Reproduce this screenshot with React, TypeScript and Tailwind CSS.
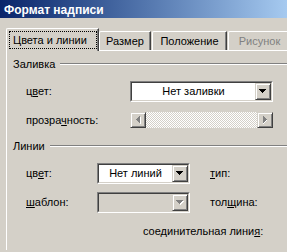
import React from 'react';

const DownArrow: React.FC<{ disabled?: boolean }> = ({ disabled }) => (
  <svg width="8" height="5" viewBox="0 0 8 5" className="block">
    {disabled && <path d="M1 1h7v1H1z M2 2h5v1H2z M3 3h3v1H3z M4 4h1v1H4z" fill="#ffffff" />}
    <path d="M0 0h7v1H0z M1 1h5v1H1z M2 2h3v1H2z M3 3h1v1H3z" fill={disabled ? '#808080' : '#000000'} />
  </svg>
);

const SideArrow: React.FC<{ dir: 'left' | 'right' }> = ({ dir }) => (
  <svg width="5" height="8" viewBox="0 0 5 8" className="block">
    <g transform={dir === 'right' ? 'translate(4 0) scale(-1 1)' : undefined}>
      <path d="M4 1h1v7H4z M3 2h1v5H3z M2 3h1v3H2z M1 4h1v1H1z" fill="#ffffff" transform={dir === 'right' ? 'translate(-1 0)' : undefined} />
      <path d="M3 0h1v7H3z M2 1h1v5H2z M1 2h1v3H1z M0 3h1v1H0z" fill="#808080" />
    </g>
  </svg>
);

const RaisedButton: React.FC<{ children: React.ReactNode; className?: string }> = ({ children, className }) => (
  <div
    className={`flex items-center justify-center bg-[#D4D0C8] border border-t-[#D4D0C8] border-l-[#D4D0C8] border-r-[#404040] border-b-[#404040] shadow-[inset_1px_1px_#ffffff,inset_-1px_-1px_#808080] ${className ?? ''}`}
  >
    {children}
  </div>
);

const Combo: React.FC<{ width: string; text?: string; disabled?: boolean }> = ({ width, text, disabled }) => (
  <div className={`flex h-[21px] ${width} border border-t-[#808080] border-l-[#808080] border-b-white border-r-white`}>
    <div
      className={`flex flex-1 border border-t-[#404040] border-l-[#404040] border-b-[#D4D0C8] border-r-[#D4D0C8] ${
        disabled ? 'bg-[#D4D0C8]' : 'bg-white'
      }`}
    >
      <div className="flex flex-1 items-center justify-center">{text}</div>
      <RaisedButton className="w-[16px] h-full">
        <DownArrow disabled={disabled} />
      </RaisedButton>
    </div>
  </div>
);

const GroupHeader: React.FC<{ title: string }> = ({ title }) => (
  <div className="flex h-[14px] items-center">
    <span>{title}</span>
    <div className="ml-[5px] h-[2px] flex-1 border-t border-t-[#808080] border-b border-b-white" />
  </div>
);

export default function App() {
  return (
    <div className="w-[287px] h-[252px] overflow-hidden bg-[#D4D0C8] text-[11px] leading-none text-black font-['Liberation_Sans',Arial,sans-serif]">
      <div className="flex h-[18px] items-center pl-[4px] pt-px bg-gradient-to-r from-[#0A246A] to-[#A6CAF0] text-[12px] font-bold text-white">
        Формат надписи
      </div>

      <div className="flex h-[234px]">
        <div className="w-[2px]" />
        <div className="w-px bg-white" />
        <div className="flex-1 pl-[6px] pt-[10px]">
          <div className="flex h-[22px] items-end">
            <div className="relative z-10 -mb-px flex h-[23px] w-[93px] items-start pl-[3px] pt-[3px] rounded-tl-[2px] bg-[#D4D0C8] border-l border-t border-white border-r border-r-[#404040] shadow-[inset_-1px_0_#808080]">
              <span className="flex h-[16px] w-[86px] items-center pl-[3px] outline outline-1 outline-dotted outline-black">
                Цвета и линии
              </span>
            </div>
            <div className="flex h-[19px] w-[52px] items-center justify-center rounded-tl-[2px] border-l border-t border-white border-r border-r-[#404040] shadow-[inset_-1px_0_#808080]">
              Размер
            </div>
            <div className="ml-px flex h-[19px] w-[75px] items-center justify-center rounded-tl-[2px] border-l border-t border-white border-r border-r-[#404040] shadow-[inset_-1px_0_#808080]">
              Положение
            </div>
            <div className="ml-px flex h-[19px] w-[62px] items-center justify-center rounded-tl-[2px] border-l border-t border-white text-[#808080]">
              Рисунок
            </div>
          </div>

          <div className="h-[200px] border-t border-l border-white pl-[6px]">
            <div className="mt-[6px]">
              <GroupHeader title="Заливка" />
            </div>

            <div className="mt-[10px] flex h-[21px] items-center pl-[13px]">
              <div className="w-[104px]">
                ц<u>в</u>ет:
              </div>
              <Combo width="w-[143px]" text="Нет заливки" />
            </div>

            <div className="mt-[10px] flex h-[16px] items-center pl-[13px]">
              <div className="w-[104px]">
                прозра<u>ч</u>ность:
              </div>
              <div className="flex h-[16px] w-[143px]">
                <RaisedButton className="w-[16px] h-[16px]">
                  <SideArrow dir="left" />
                </RaisedButton>
                <div className="flex-1 bg-[repeating-conic-gradient(#ffffff_0_25%,#D4D0C8_0_50%)] bg-[length:2px_2px]" />
                <RaisedButton className="w-[16px] h-[16px]">
                  <SideArrow dir="right" />
                </RaisedButton>
              </div>
            </div>

            <div className="mt-[11px]">
              <GroupHeader title="Линии" />
            </div>

            <div className="mt-[10px] flex h-[21px] items-center pl-[13px]">
              <div className="w-[71px]">
                цв<u>е</u>т:
              </div>
              <Combo width="w-[93px]" text="Нет линий" />
              <div className="ml-[20px]">
                <u>т</u>ип:
              </div>
            </div>

            <div className="mt-[8px] flex h-[21px] items-center pl-[13px]">
              <div className="w-[71px]">
                <u>ш</u>аблон:
              </div>
              <Combo width="w-[93px]" disabled />
              <div className="ml-[20px]">
                тол<u>щ</u>ина:
              </div>
            </div>

            <div className="mt-[11px] flex h-[14px] items-center pl-[130px]">
              <div>
                соединительная лини<u>я</u>:
              </div>
            </div>
          </div>
        </div>
      </div>
    </div>
  );
}
